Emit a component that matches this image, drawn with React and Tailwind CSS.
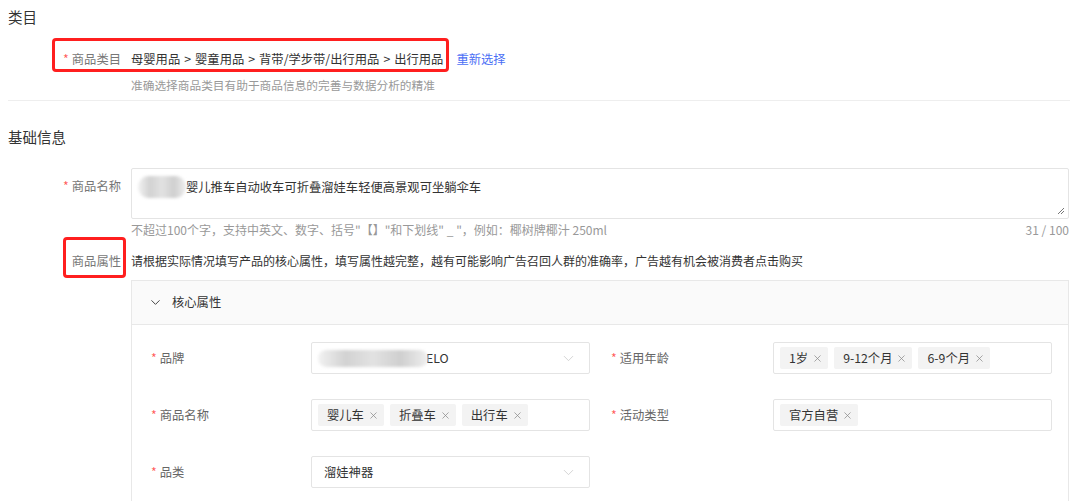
import { ChevronDown, X } from "lucide-react";

const Req = () => <span className="mr-[3px] text-[#ff5a5a]">*</span>;

const Sep = () => <span className="mx-[4px]">&gt;</span>;

const Tag = ({ children }) => (
  <span className="mr-[6px] inline-flex h-[22px] items-center rounded-[2px] bg-[#f3f3f3] pl-[9px] pr-[5px] text-[12.3px] text-[#333]">
    {children}
    <X size={11} strokeWidth={1.6} className="ml-[4px] text-[#888]" />
  </span>
);

const Field = ({ label, children, select, wide }) => (
  <div className="flex items-center">
    <div className={`${wide ? "w-[162px]" : "w-[160px]"} text-[12.3px] text-[#666]`}>
      <Req />
      {label}
    </div>
    <div className="flex h-[32px] w-[279px] items-center rounded-[2px] border border-[#e4e4e4] bg-white pl-[6px] pr-[12px]">
      <div className="flex flex-1 items-center">{children}</div>
      {select ? <ChevronDown size={17} strokeWidth={1} className="text-[#c4c4c4]" /> : null}
    </div>
  </div>
);

const Blur = ({ className }) => (
  <span className={`inline-block rounded-full bg-[linear-gradient(90deg,#f2f2f2,#d2d2d2_25%,#e2e2e2_50%,#cfcfcf_75%,#efefef)] blur-[1.5px] ${className}`} />
);

export default function App() {
  return (
    <div className="relative h-[501px] w-[1080px] overflow-hidden bg-white font-['Noto_Sans_CJK_SC',sans-serif] text-[12.3px] text-[#333]">
      <div className="px-2">
        <h2 className="pt-[8px] text-[14.5px] leading-[18px] text-[#333]">类目</h2>

        <div className="mt-[23px] flex h-5 items-center">
          <div className="w-[113px] text-right text-[#777]">
            <Req />
            商品类目
          </div>
          <div className="ml-[10px] text-[#333]">
            母婴用品<Sep />婴童用品<Sep />背带/学步带/出行用品<Sep />出行用品
          </div>
          <a className="ml-[13px] text-[#4b6ff5]">重新选择</a>
        </div>
        <div className="ml-[123px] mt-[8px] h-4 text-[11.7px] leading-4 text-[#999]">准确选择商品类目有助于商品信息的完善与数据分析的精准</div>
        <div className="mt-[7px] w-[1062px] border-t border-[#eeeeee]" />

        <h2 className="mt-[27px] text-[14.5px] leading-[18px] text-[#333]">基础信息</h2>

        <div className="mt-[22px] flex">
          <div className="w-[113px] pt-[8px] text-right leading-5 text-[#777]">
            <Req />
            商品名称
          </div>
          <div className="relative ml-[10px] h-[51px] w-[938px] rounded-[2px] border border-[#e4e4e4] px-[6px] pt-[7px] leading-5">
            <div className="flex items-center">
              <Blur className="h-[22px] w-[48px]" />
              <span>婴儿推车自动收车可折叠溜娃车轻便高景观可坐躺伞车</span>
            </div>
            <svg className="absolute bottom-[3px] right-[3px]" width="8" height="8" viewBox="0 0 8 8">
              <path d="M7 1 L1 7 M7 4 L4 7" stroke="#777" strokeWidth="1" />
            </svg>
          </div>
        </div>
        <div className="ml-[123px] mt-[3px] flex h-4 w-[938px] items-center justify-between text-[12px] text-[#999]">
          <span>不超过100个字，支持中英文、数字、括号"【】"和下划线" _ "，例如：椰树牌椰汁 250ml</span>
          <span>31 / 100</span>
        </div>

        <div className="mt-[15px] flex h-4 items-center">
          <div className="w-[113px] text-right text-[#777]">商品属性</div>
          <div className="ml-[10px] text-[12px] text-[#333]">请根据实际情况填写产品的核心属性，填写属性越完整，越有可能影响广告召回人群的准确率，广告越有机会被消费者点击购买</div>
        </div>

        <div className="ml-[123px] mt-[11px] h-[240px] w-[938px] border border-[#e8e8e8]">
          <div className="flex h-[44px] items-center border-b border-[#e8e8e8] bg-[#fafafa] pl-[16px]">
            <ChevronDown size={15} strokeWidth={1.6} className="text-[#444]" />
            <span className="ml-[9px] text-[#333]">核心属性</span>
          </div>
          <div className="flex flex-col gap-[25px] pl-[19px] pt-[17px]">
            <div className="flex gap-[21px]">
              <Field label="品牌" select>
                <Blur className="h-[17px] w-[110px]" />
                <span className="-ml-[2px]">ELO</span>
              </Field>
              <Field label="适用年龄" wide>
                <Tag>1岁</Tag>
                <Tag>9-12个月</Tag>
                <Tag>6-9个月</Tag>
              </Field>
            </div>
            <div className="flex gap-[21px]">
              <Field label="商品名称">
                <Tag>婴儿车</Tag>
                <Tag>折叠车</Tag>
                <Tag>出行车</Tag>
              </Field>
              <Field label="活动类型" wide>
                <Tag>官方自营</Tag>
              </Field>
            </div>
            <div className="flex gap-[21px]">
              <Field label="品类" select>
                <span className="ml-[6px]">溜娃神器</span>
              </Field>
            </div>
          </div>
        </div>
      </div>

      <div className="pointer-events-none absolute left-[52px] top-[38px] h-[34px] w-[397px] rounded-[4px] border-[3px] border-[#ff1f1f]" />
      <div className="pointer-events-none absolute left-[63px] top-[237px] h-[41px] w-[63px] rounded-[4px] border-[3px] border-[#ff1f1f]" />
    </div>
  );
}
